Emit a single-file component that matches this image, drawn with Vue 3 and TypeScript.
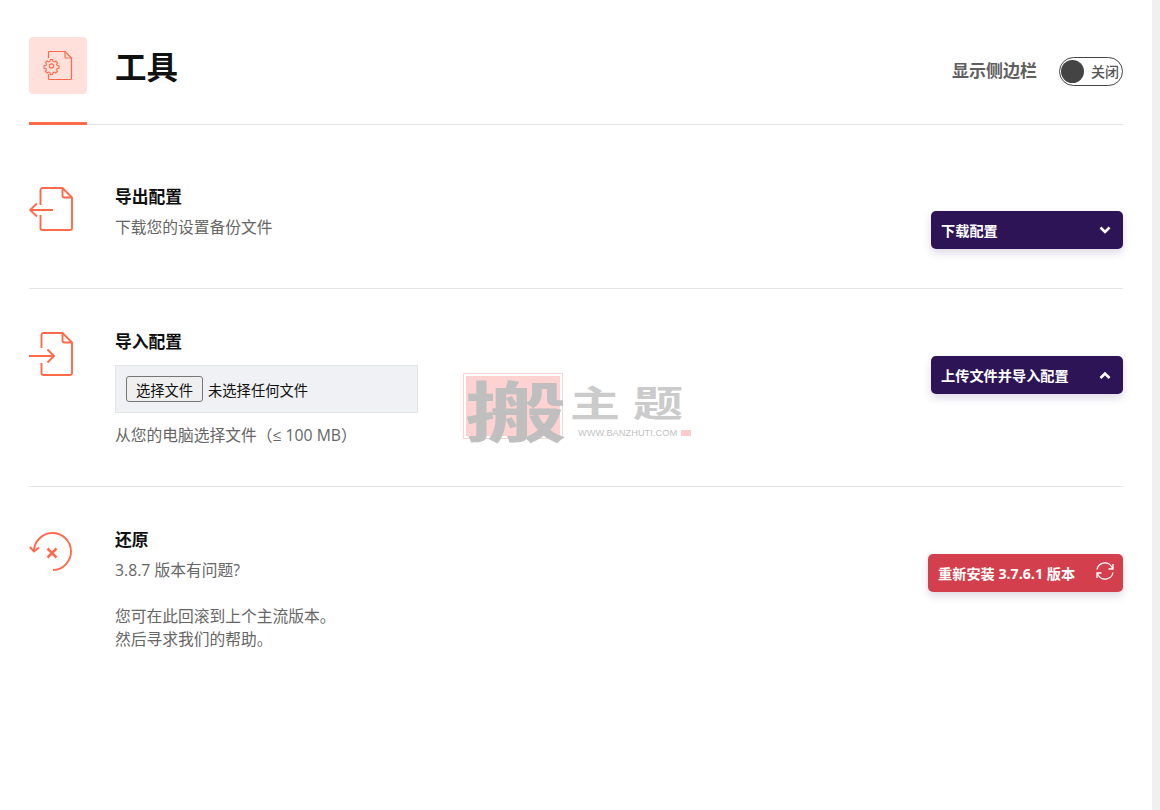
<script setup lang="ts">
const pageTitle: string = '工具'
</script>

<template>
  <div class="shell">
    <main class="page">
      <header class="head">
        <div class="head-left">
          <div class="head-icon">
            <svg width="30" height="30" viewBox="0 0 30 30" fill="none" stroke="#ff6b4a" stroke-width="1.200">
              <path d="M5.500 7V1.500a1 1 0 0 1 1-1H22L28.500 7v20.500a1 1 0 0 1-1 1H6.500a1 1 0 0 1-1-1V23" />
              <path d="M22 .5V6a1 1 0 0 0 1 1h5.500" />
              <g transform="translate(8.500 15) scale(.92)">
                <circle cx="0" cy="0" r="2.300" />
                <path d="M-1.300-7h2.600l.4 2 1.400.6 1.600-1 1.800 1.800-1 1.600.6 1.400 2 .4v2.600l-2 .4-.6 1.400 1 1.600-1.800 1.800-1.600-1-1.400.6-.4 2h-2.600l-.4-2-1.400-.6-1.600 1-1.800-1.800 1-1.600-.6-1.400-2-.4v-2.600l2-.4.6-1.400-1-1.600 1.800-1.800 1.600 1 1.400-.6z" />
              </g>
            </svg>
          </div>
          <h1 class="title">{{ pageTitle }}</h1>
        </div>
        <div class="head-right">
          <span class="side-label">显示侧边栏</span>
          <div class="toggle">
            <span class="knob"></span>
            <span class="toggle-text">关闭</span>
          </div>
        </div>
      </header>

      <section class="row row-export">
        <svg class="row-icon" width="46" height="46" viewBox="0 0 46 46" fill="none" stroke="#ff6b4a" stroke-width="1.900">
          <path d="M11.500 18V3a2 2 0 0 1 2-2H33.500L43 10.500V41a2 2 0 0 1-2 2H13.500a2 2 0 0 1-2-2V28" />
          <path d="M33.500 1V8.500a2 2 0 0 0 2 2H43" />
          <path d="M1 23H24M8 16.500L1 23l7 6.500" />
        </svg>
        <div class="row-body">
          <h2 class="row-title">导出配置</h2>
          <p class="row-text">下载您的设置备份文件</p>
        </div>
        <button class="action action-dark" type="button">
          <span>下载配置</span>
          <svg width="12" height="9" viewBox="0 0 12 9" fill="none" stroke="#fff" stroke-width="2.600"><path d="M1.500 1.500L6 6l4.500-4.500" /></svg>
        </button>
      </section>

      <section class="row row-import">
        <svg class="row-icon" width="46" height="46" viewBox="0 0 46 46" fill="none" stroke="#ff6b4a" stroke-width="1.900">
          <path d="M12.500 16V3a2 2 0 0 1 2-2H33.500L43 10.500V41a2 2 0 0 1-2 2H14.500a2 2 0 0 1-2-2V31" />
          <path d="M33.500 1V8.500a2 2 0 0 0 2 2H43" />
          <path d="M0 24h25M18.500 17.500L25 24l-6.500 6.500" />
        </svg>
        <div class="row-body">
          <h2 class="row-title">导入配置</h2>
          <div class="file-box">
            <button class="file-btn" type="button">选择文件</button>
            <span class="file-none">未选择任何文件</span>
          </div>
          <p class="row-text file-hint">从您的电脑选择文件（≤ 100 MB）</p>
        </div>
        <button class="action action-dark" type="button">
          <span>上传文件并导入配置</span>
          <svg width="12" height="9" viewBox="0 0 12 9" fill="none" stroke="#fff" stroke-width="2.600"><path d="M1.500 7L6 2.500 10.500 7" /></svg>
        </button>
        <div class="watermark" aria-hidden="true">
          <div class="wm-seal"><span class="wm-big">搬</span></div>
          <div class="wm-side">
            <div class="wm-name"><span>主</span><span>题</span></div>
            <div class="wm-url">WWW.BANZHUTI.COM<i class="wm-dot"></i></div>
          </div>
        </div>
      </section>

      <section class="row row-restore">
        <svg class="row-icon" width="46" height="46" viewBox="0 0 46 46" fill="none" stroke="#ff6b4a" stroke-width="1.900">
          <path d="M5 19.500A18.500 18.500 0 1 1 24 38" />
          <path d="M.8 15L5 19.500 10 15.500" />
          <path d="M18.500 16.500l9 9M27.500 16.500l-9 9" stroke-width="2.500" />
        </svg>
        <div class="row-body">
          <h2 class="row-title">还原</h2>
          <p class="row-text">3.8.7 版本有问题?</p>
          <p class="row-text para">您可在此回滚到上个主流版本。<br />然后寻求我们的帮助。</p>
        </div>
        <button class="action action-red" type="button">
          <span>重新安装 3.7.6.1 版本</span>
          <svg class="refresh" width="20" height="20" viewBox="0 0 20 20" fill="none" stroke="#fff" stroke-width="1.300">
            <path d="M2 8.500A8 8 0 0 1 16.500 5.500L18 8M18 3v5h-4.500" />
            <path d="M18 11.500A8 8 0 0 1 3.500 14.500L2 12M2 17v-5h4.500" />
          </svg>
        </button>
      </section>
    </main>
    <div class="scrollbar"></div>
  </div>
</template>

<style>
html, body { margin: 0; background: #fff; overflow: hidden; }
</style>

<style scoped>
.shell {
  display: flex;
  height: 810px;
  overflow: hidden;
  font-family: "Open Sans", "Noto Sans CJK SC", sans-serif;
  color: #666;
}
.page { flex: 1; min-width: 0; padding: 37px 29px 0; box-sizing: border-box; }
.scrollbar { width: 8px; background: #f0f0f0; }

.head {
  display: flex;
  justify-content: space-between;
  align-items: flex-start;
  height: 87px;
  border-bottom: 1px solid #e2e4e9;
  position: relative;
}
.head::after {
  content: "";
  position: absolute;
  left: 0;
  bottom: -1px;
  width: 58px;
  height: 3px;
  background: #ff6b4a;
}
.head-left { display: flex; align-items: flex-start; }
.head-icon {
  width: 58px;
  height: 57px;
  border-radius: 4px;
  background: #ffe0da;
  display: flex;
  align-items: center;
  justify-content: center;
}
.title {
  margin: 0 0 0 28px;
  font-size: 31.500px;
  font-weight: 700;
  line-height: 60px;
  color: #111;
}
.head-right { display: flex; align-items: center; gap: 22px; padding-top: 19px; }
.side-label { font-size: 17px; font-weight: 700; color: #5f5f5f; line-height: 30px; }
.toggle {
  width: 64px;
  height: 29px;
  box-sizing: border-box;
  border: 1px solid #444;
  border-radius: 15px;
  display: flex;
  align-items: center;
  padding-left: 1px;
}
.knob { width: 23px; height: 23px; border-radius: 50%; background: #444; }
.toggle-text { margin-left: 7px; font-size: 14px; font-weight: 500; color: #555; white-space: nowrap; }

.row {
  display: flex;
  align-items: flex-start;
  position: relative;
  border-bottom: 1px solid #e2e4e9;
  box-sizing: border-box;
}
.row-export { height: 164px; padding-top: 62px; }
.row-import { height: 198px; padding-top: 43px; }
.row-restore { border-bottom: 0; padding-top: 45px; }
.row-icon { flex: none; margin-right: 40px; width: 46px; height: 46px; }
.row-body { flex: 1; min-width: 0; margin-top: -1px; }
.row-restore .row-body { margin-top: -3px; }
.row-title {
  margin: 0;
  font-size: 16.800px;
  font-weight: 700;
  line-height: 22px;
  color: #111;
}
.row-text { margin: 8px 0 0; font-size: 15.750px; line-height: 23px; color: #666; }
.row-restore .para { margin-top: 23px; }

.file-box {
  width: 303px;
  height: 48px;
  box-sizing: border-box;
  margin-top: 12px;
  background: #f0f1f5;
  border: 1px solid #e2e4e9;
  display: flex;
  align-items: center;
  padding-left: 10px;
}
.file-btn {
  width: 77px;
  height: 26px;
  padding: 0;
  background: #efefef;
  border: 1px solid #767676;
  border-radius: 3px;
  font: 14.300px "Noto Sans CJK SC", sans-serif;
  color: #111;
}
.file-none { margin-left: 5px; font: 14.300px "Noto Sans CJK SC", sans-serif; color: #111; }
.file-hint { margin-top: 11px; }

.action {
  position: absolute;
  right: 0;
  height: 38px;
  border: 0;
  border-radius: 5px;
  color: #fff;
  font: 700 14.200px "Open Sans", "Noto Sans CJK SC", sans-serif;
  display: flex;
  align-items: center;
  justify-content: space-between;
  box-shadow: 0 4px 8px rgba(45, 20, 85, .16);
  box-sizing: border-box;
}
.action-dark { background: #2d1456; width: 192px; padding: 0 12px 0 10px; }
.action-red { background: #d33f4d; width: 195px; padding: 0 8px 0 10px; top: 67px; }
.refresh { margin-bottom: 4px; }
.row-export .action { top: 86px; }
.row-import .action { top: 67px; }

.watermark {
  position: absolute;
  left: 434px;
  top: 84px;
  display: flex;
  pointer-events: none;
}
.wm-seal {
  width: 100px;
  height: 66px;
  box-sizing: border-box;
  padding: 2px;
  border: 1px solid #fcd2d2;
  background: #ffd2d2 content-box;
  display: flex;
  align-items: center;
  justify-content: center;
}
.wm-big {
  font: 700 66px/60px "Noto Sans CJK SC", sans-serif;
  color: #bfbfbf;
  transform: translate(3px, 2px) scaleX(1.55);
}
.wm-side { margin-left: 7px; display: flex; flex-direction: column; }
.wm-name {
  display: flex;
  gap: 13px;
  margin-top: 6px;
  height: 44px;
  font: 700 50px/44px "Noto Sans CJK SC", sans-serif;
  color: #cbcbcb;
  white-space: nowrap;
  transform: scaleY(.72);
  transform-origin: 0 50%;
}
.wm-url {
  margin: 4px 0 0 8px;
  font: 9.300px/12px "Liberation Sans", sans-serif;
  color: #c2c2c2;
  display: flex;
  align-items: center;
  white-space: nowrap;
}
.wm-dot { width: 10px; height: 6px; background: #fcc; margin-left: 4px; }
</style>
